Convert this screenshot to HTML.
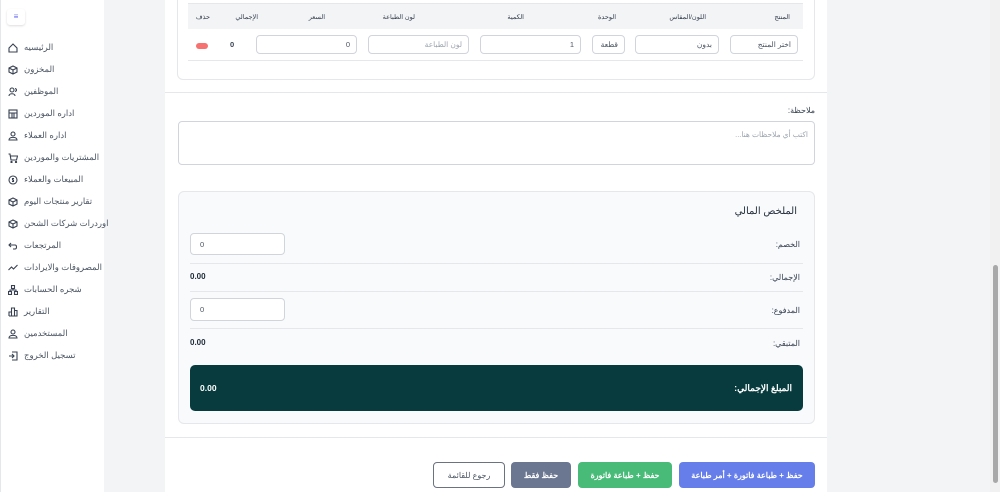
<!DOCTYPE html>
<html dir="rtl"><head><meta charset="utf-8"><style>
*{box-sizing:border-box;margin:0;padding:0}
body{width:1000px;height:492px;overflow:hidden;background:#f3f4f6;font-family:"Liberation Sans","Noto Sans CJK SC",sans-serif;position:relative;color:#374151}
.a{position:absolute}
.side{left:0;top:0;width:104px;height:492px;background:#fff;border-left:1px solid #e5e7eb}
.nav{position:absolute;left:8px;font-size:8.5px;color:#4b5563;display:flex;align-items:center;gap:6px;direction:ltr}
.nav svg{width:10px;height:10px;stroke:#374151;fill:none;stroke-width:1.1}
.inp{position:absolute;background:#fff;border:1px solid #d1d5db;border-radius:4px;font-size:7.5px;color:#4b5563;display:flex;align-items:center;padding:0 6px}
.th{position:absolute;top:13px;font-size:6.5px;color:#374151}
.lbl{position:absolute;font-size:8px;color:#374151}
.btn{position:absolute;top:462px;height:26px;border-radius:4px;color:#fff;font-size:8px;display:flex;align-items:center;justify-content:center;font-weight:bold}
</style></head><body>
<div class="a side"></div>
<div class="a" style="left:7px;top:9px;width:18px;height:16px;border-radius:3px;box-shadow:0 1px 2px #ddd;color:#6366f1;font-size:8px;text-align:center;line-height:16px">≡</div>
<div class="nav" style="top:42px"><svg viewBox="0 0 10 10"><path d="M1 5L5 1L9 5V9H1Z"/></svg>الرئيسيه</div>
<div class="nav" style="top:64px"><svg viewBox="0 0 10 10"><path d="M5 1L9 3V7L5 9L1 7V3Z M1 3L5 5L9 3M5 5V9"/></svg>المخزون</div>
<div class="nav" style="top:86px"><svg viewBox="0 0 10 10"><circle cx="4" cy="3" r="2"/><path d="M1 9C1 6 7 6 7 9M7 1.5C9 2 9 4 7 4.5"/></svg>الموظفين</div>
<div class="nav" style="top:108px"><svg viewBox="0 0 10 10"><rect x="1" y="1" width="8" height="8"/><path d="M1 4H9M4 4V9M6 4V9"/></svg>اداره الموردين</div>
<div class="nav" style="top:130px"><svg viewBox="0 0 10 10"><circle cx="5" cy="3" r="2"/><path d="M1 9C1 5.5 9 5.5 9 9Z"/></svg>اداره العملاء</div>
<div class="nav" style="top:152px"><svg viewBox="0 0 10 10"><path d="M0.5 1H2L3 7H8.5L9.5 3H2.5"/><circle cx="3.5" cy="9" r=".6"/><circle cx="8" cy="9" r=".6"/></svg>المشتريات والموردين</div>
<div class="nav" style="top:174px"><svg viewBox="0 0 10 10"><circle cx="5" cy="5" r="4"/><path d="M6 3.5H4.5V5H5.5V6.5H4"/></svg>المبيعات والعملاء</div>
<div class="nav" style="top:196px"><svg viewBox="0 0 10 10"><path d="M5 1L9 3V7L5 9L1 7V3Z M1 3L5 5L9 3M5 5V9"/></svg>تقارير منتجات اليوم</div>
<div class="nav" style="top:218px"><svg viewBox="0 0 10 10"><path d="M5 1L9 3V7L5 9L1 7V3Z M1 3L5 5L9 3M5 5V9"/></svg>اوردرات شركات الشحن</div>
<div class="nav" style="top:240px"><svg viewBox="0 0 10 10"><path d="M3 2L1 4L3 6M1 4H7C9 4 9 8 7 8H5"/></svg>المرتجعات</div>
<div class="nav" style="top:262px"><svg viewBox="0 0 10 10"><path d="M0.5 7L3.5 4L5.5 6L9.5 2"/></svg>المصروفات والايرادات</div>
<div class="nav" style="top:284px"><svg viewBox="0 0 10 10"><rect x="3.5" y="0.5" width="3" height="3"/><rect x="0.5" y="6.5" width="3" height="3"/><rect x="6.5" y="6.5" width="3" height="3"/><path d="M5 3.5V5M2 6.5V5H8V6.5"/></svg>شجره الحسابات</div>
<div class="nav" style="top:306px"><svg viewBox="0 0 10 10"><path d="M1 9V5H3.5V9M3.5 9V1H6.5V9M6.5 9V3.5H9V9H1"/></svg>التقارير</div>
<div class="nav" style="top:328px"><svg viewBox="0 0 10 10"><circle cx="5" cy="3" r="2"/><path d="M1 9C1 5.5 9 5.5 9 9Z"/></svg>المستخدمين</div>
<div class="nav" style="top:350px"><svg viewBox="0 0 10 10"><path d="M4 1H9V9H4M1 5H6M4 3L6 5L4 7"/></svg>تسجيل الخروج</div>

<div class="a" style="left:165px;top:0;width:662px;height:492px;background:#fff"></div>
<div class="a" style="left:165px;top:92px;width:662px;height:1px;background:#e5e7eb"></div>
<div class="a" style="left:165px;top:437px;width:662px;height:1px;background:#e5e7eb"></div>
<div class="a" style="left:177px;top:-5px;width:638px;height:85px;border:1px solid #e5e7eb;border-radius:6px"></div>
<div class="a" style="left:188px;top:3px;width:615px;height:26px;background:#f3f4f6;border-top:1px solid #e5e7eb"></div>
<div class="a" style="left:188px;top:60px;width:615px;height:1px;background:#e5e7eb"></div>
<div class="th" style="right:210px">المنتج</div>
<div class="th" style="right:294px">اللون/المقاس</div>
<div class="th" style="right:384px">الوحدة</div>
<div class="th" style="right:476px">الكمية</div>
<div class="th" style="right:585px">لون الطباعة</div>
<div class="th" style="right:675px">السعر</div>
<div class="th" style="right:742px">الإجمالي</div>
<div class="th" style="right:790px">حذف</div>
<div class="inp" style="left:730px;top:35px;width:68px;height:19px">اختر المنتج</div>
<div class="inp" style="left:635px;top:35px;width:84px;height:19px">بدون</div>
<div class="inp" style="left:592px;top:35px;width:33px;height:19px">قطعة</div>
<div class="inp" style="left:480px;top:35px;width:101px;height:19px">1</div>
<div class="inp" style="left:368px;top:35px;width:101px;height:19px;color:#9ca3af">لون الطباعة</div>
<div class="inp" style="left:256px;top:35px;width:101px;height:19px">0</div>
<div class="a" style="left:230px;top:40px;font-size:7.5px;font-weight:bold">0</div>
<div class="a" style="left:196px;top:43px;width:12px;height:6px;border-radius:3px;background:#f87171"></div>

<div class="lbl" style="right:185px;top:106px">ملاحظة:</div>
<div class="inp" style="left:178px;top:121px;width:637px;height:44px;align-items:flex-start;padding-top:8px;color:#9ca3af">اكتب أي ملاحظات هنا...</div>

<div class="a" style="left:178px;top:191px;width:637px;height:233px;background:#f8fafc;border:1px solid #e5e7eb;border-radius:6px"></div>
<div class="a" style="right:203px;top:206px;font-size:10px;color:#1f2937">الملخص المالي</div>
<div class="lbl" style="right:200px;top:240px">الخصم:</div>
<div class="inp" style="left:190px;top:233px;width:95px;height:22px;direction:ltr;justify-content:flex-start;padding-left:9px">0</div>
<div class="a" style="left:190px;top:263px;width:613px;height:1px;background:#e5e7eb"></div>
<div class="lbl" style="right:200px;top:273px">الإجمالي:</div>
<div class="a" style="left:190px;top:272px;font-size:8px;font-weight:bold;color:#1f2937">0.00</div>
<div class="a" style="left:190px;top:291px;width:613px;height:1px;background:#e5e7eb"></div>
<div class="lbl" style="right:200px;top:306px">المدفوع:</div>
<div class="inp" style="left:190px;top:298px;width:95px;height:23px;direction:ltr;justify-content:flex-start;padding-left:9px">0</div>
<div class="a" style="left:190px;top:328px;width:613px;height:1px;background:#e5e7eb"></div>
<div class="lbl" style="right:200px;top:339px">المتبقي:</div>
<div class="a" style="left:190px;top:338px;font-size:8px;font-weight:bold;color:#1f2937">0.00</div>
<div class="a" style="left:190px;top:365px;width:613px;height:46px;background:#073b3e;border-radius:5px"></div>
<div class="a" style="right:208px;top:383px;font-size:9px;font-weight:bold;color:#fff">المبلغ الإجمالي:</div>
<div class="a" style="left:200px;top:383px;font-size:8.5px;font-weight:bold;color:#fff">0.00</div>

<div class="btn" style="left:679px;width:136px;background:#667eea">حفظ + طباعة فاتورة + أمر طباعة</div>
<div class="btn" style="left:578px;width:94px;background:#48bb78">حفظ + طباعة فاتورة</div>
<div class="btn" style="left:511px;width:60px;background:#6b7691">حفظ فقط</div>
<div class="btn" style="left:433px;width:72px;background:#fff;border:1px solid #6b7280;color:#4b5563;font-weight:normal">رجوع للقائمة</div>

<div class="a" style="left:990px;top:0;width:10px;height:492px;background:#f1f1f1"></div>
<div class="a" style="left:993px;top:265px;width:5px;height:218px;background:#a8a8a8;border-radius:3px"></div>
</body></html>
